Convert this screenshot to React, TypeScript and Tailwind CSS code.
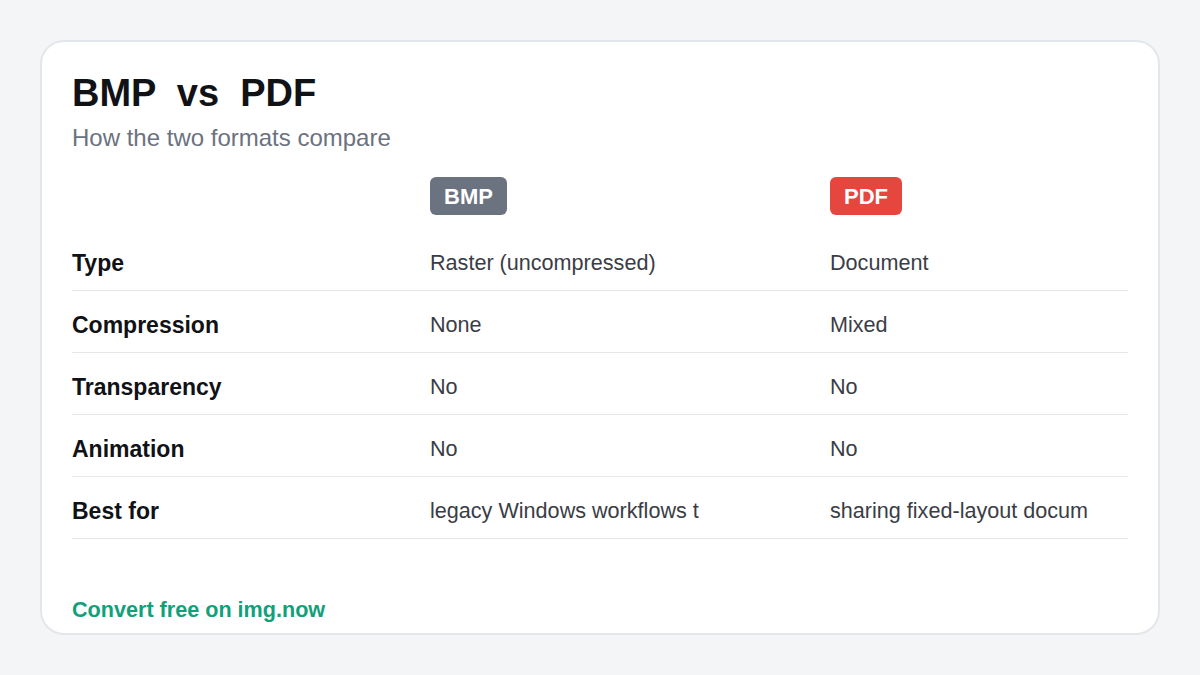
const rows = [
  { label: "Type", a: "Raster (uncompressed)", b: "Document" },
  { label: "Compression", a: "None", b: "Mixed" },
  { label: "Transparency", a: "No", b: "No" },
  { label: "Animation", a: "No", b: "No" },
  { label: "Best for", a: "legacy Windows workflows t", b: "sharing fixed-layout docum" },
];

export default function App() {
  return (
    <div
      className="w-[1200px] h-[675px] bg-[#f4f5f7] p-10"
      style={{ fontFamily: '"Liberation Sans", Arial, sans-serif' }}
    >
      <div className="h-[595px] bg-white border-2 border-[#e3e6ea] rounded-[24px] px-[30px] pt-[32px]">
        <h1 className="text-[38px] leading-[38px] font-bold text-[#111216] whitespace-pre">
          {"BMP  vs  PDF"}
        </h1>
        <p className="mt-2 text-[24px] leading-[36px] text-[#6b7280]">
          How the two formats compare
        </p>

        <div className="mt-[21px] grid grid-cols-[358px_400px_1fr] pb-[14px]">
          <div />
          <div>
            <span className="inline-flex items-center h-[38px] px-[14px] rounded-[6px] bg-[#6b7280] text-white font-bold text-[22px]">
              BMP
            </span>
          </div>
          <div>
            <span className="inline-flex items-center h-[38px] px-[14px] rounded-[6px] bg-[#e5463e] text-white font-bold text-[22px]">
              PDF
            </span>
          </div>
        </div>

        <div className="flex flex-col">
          {rows.map((r) => (
            <div
              key={r.label}
              className="grid grid-cols-[358px_400px_1fr] items-center h-[62px] border-b border-[#e5e7eb]"
            >
              <div className="font-bold text-[23px] text-[#111216] pt-[8px]">{r.label}</div>
              <div className="text-[21.6px] text-[#3a3d45] pt-[8px]">{r.a}</div>
              <div className="text-[21.6px] text-[#3a3d45] pt-[8px]">{r.b}</div>
            </div>
          ))}
        </div>

        <div className="mt-[60px] text-[21.6px] leading-[22px] font-bold text-[#12a07a]">
          Convert free on img.now
        </div>
      </div>
    </div>
  );
}
